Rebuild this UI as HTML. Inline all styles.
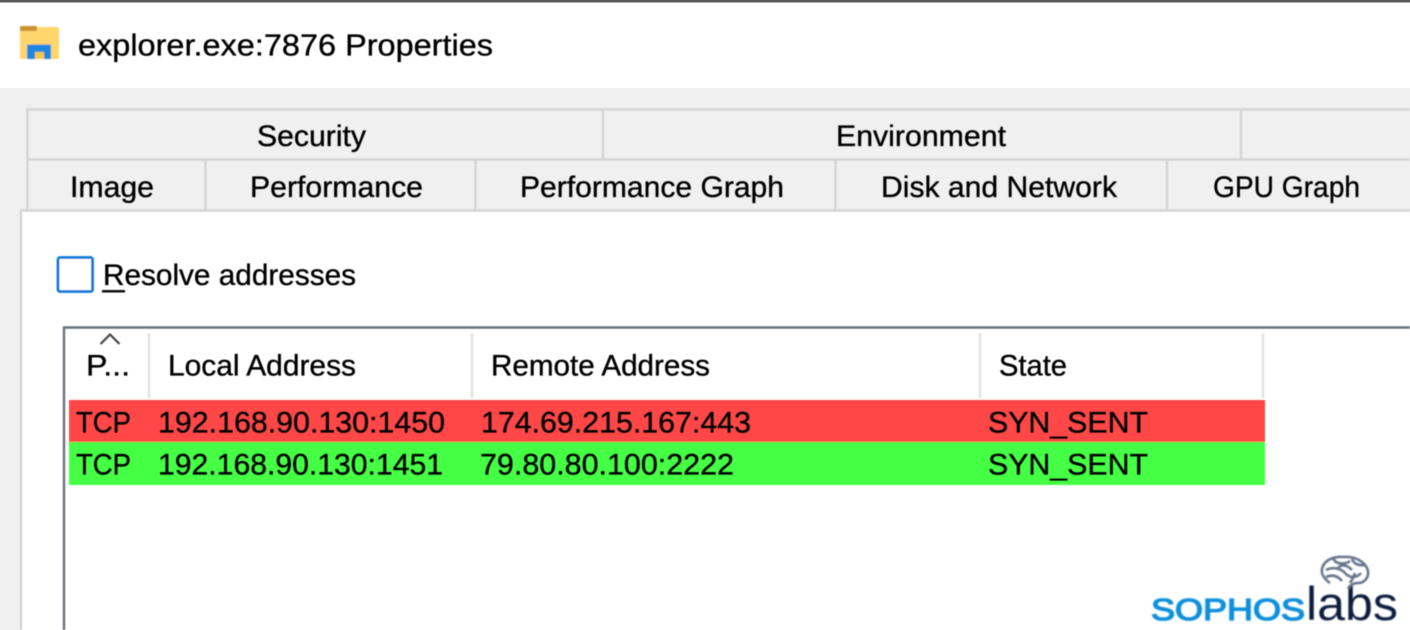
<!DOCTYPE html>
<html><head><meta charset="utf-8"><title>explorer.exe:7876 Properties</title>
<style>
html,body{margin:0;padding:0;width:1410px;height:630px;overflow:hidden;background:#fff}
svg{display:block;position:absolute;left:0;top:0}
text{font-family:"Liberation Sans",sans-serif;fill:#050505}
.b text{stroke:#050505;stroke-width:.35px}
</style></head><body>
<svg width="1410" height="630" viewBox="0 0 1410 630" xmlns="http://www.w3.org/2000/svg">
<defs><filter id="s" x="-2%" y="-2%" width="104%" height="104%"><feGaussianBlur stdDeviation="0.55"/></filter>
<filter id="l" x="-5%" y="-5%" width="110%" height="110%"><feGaussianBlur stdDeviation="0.9"/></filter></defs>
<rect width="1410" height="630" fill="#fff"/>
<rect width="1410" height="2.500" fill="#5a5a5a"/>
<rect y="88" width="1410" height="542" fill="#f0f0f0"/>
<rect x="21" y="210" width="1389" height="420" fill="#fff"/>
<g filter="url(#s)">
<g fill="none" stroke="#d4d4d4" stroke-width="2.400">
<path d="M27.500 210V109.500H1410M27.500 159.500H1410M21 630V210.500H1410"/>
<path d="M603 109V159M1241 109V159M205.500 159V210M475.500 159V210M835.500 159V210M1167 159V210"/>
</g>
<g fill="none" stroke="#e2e2e2" stroke-width="2.400"><path d="M149 333V398M472 333V398M980 333V398M1263 333V398"/></g>
<path d="M64 630V327.500H1410" fill="none" stroke="#69717a" stroke-width="2.400"/>
<rect x="58" y="257.500" width="34.500" height="34" rx="2" fill="#fff" stroke="#0a78d6" stroke-width="2.800"/>
<path d="M100.500 344L110 334.500L119.500 344" fill="none" stroke="#444" stroke-width="2.200"/>
<rect x="69" y="400" width="1196" height="42" fill="#ff4646"/>
<rect x="69" y="442" width="1196" height="43" fill="#45ff45"/>
</g>
<g filter="url(#l)">
<rect x="20" y="27" width="39" height="32" rx="1.500" fill="#ffd56c"/>
<rect x="20" y="26" width="17" height="5" rx="1.500" fill="#c8922e"/>
<path d="M27 59V44.500H51V59H44V52H35V59Z" fill="#1a86e0"/>
<rect x="35" y="52" width="9" height="7" fill="#f5c945"/>
</g>
<g class="b" filter="url(#s)">
<text x="78" y="55.500" font-size="31" textLength="415" lengthAdjust="spacingAndGlyphs">explorer.exe:7876 Properties</text>
<g font-size="30">
<text x="257" y="146" textLength="109" lengthAdjust="spacingAndGlyphs">Security</text>
<text x="836" y="146" textLength="170" lengthAdjust="spacingAndGlyphs">Environment</text>
<text x="70" y="197" textLength="84" lengthAdjust="spacingAndGlyphs">Image</text>
<text x="250" y="197" textLength="173" lengthAdjust="spacingAndGlyphs">Performance</text>
<text x="520" y="197" textLength="264" lengthAdjust="spacingAndGlyphs">Performance Graph</text>
<text x="881" y="197" textLength="236" lengthAdjust="spacingAndGlyphs">Disk and Network</text>
<text x="1213" y="197" textLength="147" lengthAdjust="spacingAndGlyphs">GPU Graph</text>
<text x="103" y="285" textLength="253" lengthAdjust="spacingAndGlyphs">Resolve addresses</text>
<text x="86" y="375.500" textLength="44" lengthAdjust="spacingAndGlyphs">P...</text>
<text x="168" y="375.500" textLength="188" lengthAdjust="spacingAndGlyphs">Local Address</text>
<text x="491" y="375.500" textLength="219" lengthAdjust="spacingAndGlyphs">Remote Address</text>
<text x="999" y="375.500" textLength="68" lengthAdjust="spacingAndGlyphs">State</text>
<text x="76" y="432.500" textLength="55" lengthAdjust="spacingAndGlyphs">TCP</text>
<text x="158" y="432.500" textLength="287" lengthAdjust="spacingAndGlyphs">192.168.90.130:1450</text>
<text x="481" y="432.500" textLength="270" lengthAdjust="spacingAndGlyphs">174.69.215.167:443</text>
<text x="988" y="432.500" textLength="160" lengthAdjust="spacingAndGlyphs">SYN_SENT</text>
<text x="76" y="474.500" textLength="55" lengthAdjust="spacingAndGlyphs">TCP</text>
<text x="158" y="474.500" textLength="285" lengthAdjust="spacingAndGlyphs">192.168.90.130:1451</text>
<text x="480" y="474.500" textLength="254" lengthAdjust="spacingAndGlyphs">79.80.80.100:2222</text>
<text x="988" y="474.500" textLength="160" lengthAdjust="spacingAndGlyphs">SYN_SENT</text>
</g>
<rect x="102" y="290" width="23" height="2.500" fill="#111"/>
</g>
<g filter="url(#l)">
<text x="1151" y="620" font-size="31" textLength="154" lengthAdjust="spacingAndGlyphs" style="fill:#0f8fdb;stroke:#0f8fdb;stroke-width:1.300px">SOPHOS</text>
<text x="1306" y="620" font-size="47" textLength="92" lengthAdjust="spacingAndGlyphs" style="fill:#101f3c">labs</text>
<g fill="none" stroke="#66748a" stroke-width="2.600">
<path d="M1330 583C1323 578 1320 572 1323 566C1326 559 1336 556 1344 557C1355 556 1366 562 1368 571C1369 578 1364 583 1358 583C1353 583 1350 585 1348 589"/>
<path d="M1326 570C1334 566 1342 569 1346 574C1350 578 1357 578 1361 573M1334 558C1333 564 1345 565 1350 561M1352 559C1354 564 1359 566 1365 565M1326 577C1333 574 1338 576 1342 581M1338 568C1342 563 1348 566 1352 570M1355 573C1354 577 1352 580 1350 583"/>
</g>
</g>
</svg>
</body></html>
